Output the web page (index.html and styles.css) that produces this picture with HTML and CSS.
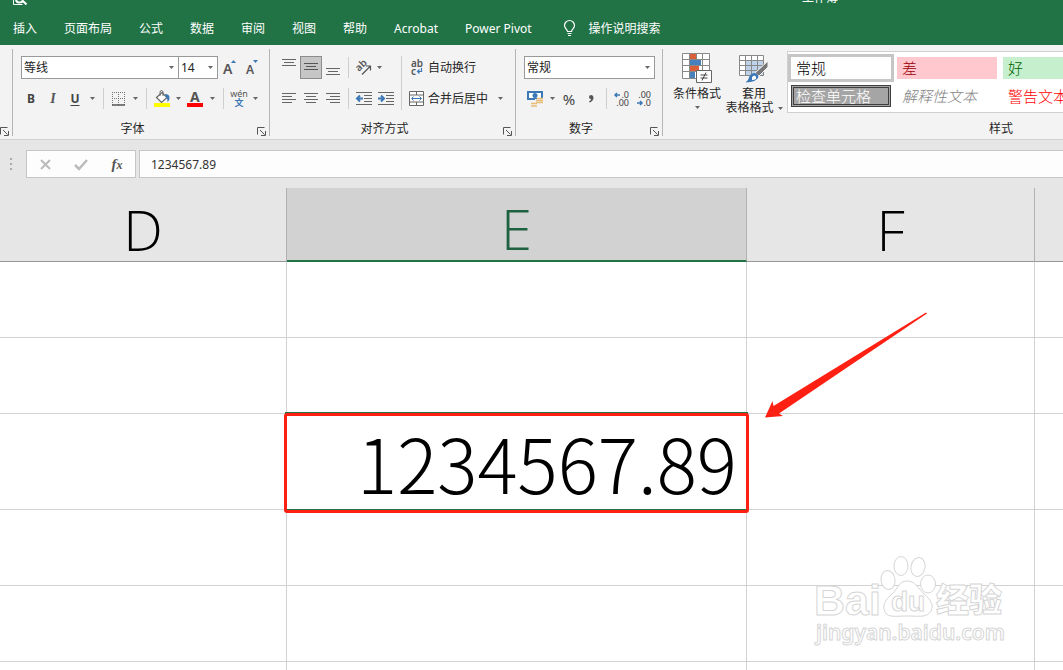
FILE: index.html
```html
<!DOCTYPE html>
<html lang="zh-CN">
<head>
<meta charset="utf-8">
<title>工作簿</title>
<link rel="stylesheet" href="styles.css">
</head>
<body>
<svg class="defs" width="0" height="0" aria-hidden="true">
  <symbol id="caret" viewBox="0 0 5 3"><path d="M0 0h5L2.500 3z" fill="#666"/></symbol>
  <symbol id="launch" viewBox="0 0 9 9"><path d="M.5 7.500v-7h7M3 3l4.500 4.500M8.500 4v4.500H4" fill="none" stroke="#555"/></symbol>
</svg>
<div class="app">
  <header class="top">
    <div class="titlebar">
      <svg class="preview" width="15" height="7" viewBox="0 0 15 7"><path d="M.5 0v5.500h9" fill="none" stroke="#fff"/><path d="M3 0q0 3.500 3.500 3.500T10 0M9.500 1.500l4 4" fill="none" stroke="#fff" stroke-width="2"/></svg>
      <span class="title">工作簿</span>
    </div>
    <nav class="tabs">
      <button>插入</button><button>页面布局</button><button>公式</button><button>数据</button><button>审阅</button><button>视图</button><button>帮助</button><button>Acrobat</button><button>Power Pivot</button>
      <button class="tell"><svg width="13" height="17" viewBox="0 0 13 17"><path d="M4.500 11.500C4.500 9.500 1.500 8.500 1.500 5.500a5 5 0 0 1 10 0c0 3-3 4-3 6zM4.500 13.500h4M5 15.500h3" fill="none" stroke="#fff" stroke-width="1.200"/></svg>操作说明搜索</button>
    </nav>
  </header>

  <div class="ribbon">
    <section class="group clip">
      <div class="foot"><button class="launch" aria-label="剪贴板设置"><svg width="9" height="9"><use href="#launch"/></svg></button></div>
    </section>

    <section class="group font">
      <div class="row fields">
        <label class="combo name"><select aria-label="字体"><option>等线</option></select><svg width="5" height="3"><use href="#caret"/></svg></label>
        <label class="combo size"><select aria-label="字号"><option>14</option></select><svg width="5" height="3"><use href="#caret"/></svg></label>
        <button class="tool w24" aria-label="增大字号"><svg width="14" height="16" viewBox="0 0 14 16"><text x="0" y="14" class="big-a">A</text><path d="M8 3h5L10.500 0z" fill="#3b78b5"/></svg></button>
        <button class="tool w20" aria-label="减小字号"><svg width="14" height="16" viewBox="0 0 14 16"><text x="1" y="14" class="small-a">A</text><path d="M8 0h5L10.500 3z" fill="#3b78b5"/></svg></button>
      </div>
      <div class="row">
        <button class="tool w22 bold">B</button><button class="tool w22 italic">I</button><button class="tool w22 under">U</button><button class="drop" aria-label="下划线选项"><svg width="5" height="3"><use href="#caret"/></svg></button>
        <i class="sep"></i>
        <button class="tool w20" aria-label="边框"><svg width="14" height="14" viewBox="0 0 14 14"><path d="M0 .5h13M0 6.500h13M.5 0v13M6.500 0v13M12.500 0v13" fill="none" stroke="#777" stroke-dasharray="1 1"/><path d="M0 13h13" stroke="#555" stroke-width="1.500"/></svg></button><button class="drop" aria-label="边框选项"><svg width="5" height="3"><use href="#caret"/></svg></button>
        <i class="sep"></i>
        <button class="tool w20" aria-label="填充颜色"><svg width="17" height="17" viewBox="0 0 17 17"><path d="M2.500 7.500L8 2.500l5 5-5.500 5z" fill="#fff" stroke="#666" stroke-width="1.200"/><path d="M6 6V2.500q0-2 1.500-2t1.500 2V6" fill="none" stroke="#666"/><path d="M11 4q4 0 4.500 3t-2 5q.5-3-2-6z" fill="#3b78b5"/><path d="M0 13h16v4H0z" fill="#ff0"/></svg></button><button class="drop" aria-label="填充选项"><svg width="5" height="3"><use href="#caret"/></svg></button>
        <button class="tool w22" aria-label="字体颜色"><svg width="16" height="17" viewBox="0 0 16 17"><text x="3" y="12" class="color-a">A</text><path d="M0 13h16v4H0z" fill="#f00"/></svg></button><button class="drop" aria-label="颜色选项"><svg width="5" height="3"><use href="#caret"/></svg></button>
        <i class="sep"></i>
        <button class="tool w20 phon"><span>wén</span><b>文</b></button><button class="drop" aria-label="拼音选项"><svg width="5" height="3"><use href="#caret"/></svg></button>
      </div>
      <div class="foot"><span>字体</span><button class="launch" aria-label="字体设置"><svg width="9" height="9"><use href="#launch"/></svg></button></div>
    </section>

    <section class="group align">
      <div class="halves">
        <div class="stack">
          <div class="row">
            <button class="tool w22" aria-label="顶端对齐"><svg width="14" height="17" viewBox="0 0 14 17"><path d="M0 .5h14M2 3.500h10M0 6.500h14" stroke="#666"/></svg></button><button class="tool w22 on" aria-label="垂直居中"><svg width="14" height="15" viewBox="0 0 14 15"><path d="M0 3.500h14M2 6.500h10M0 9.500h14" stroke="#555"/></svg></button><button class="tool w22" aria-label="底端对齐"><svg width="14" height="15" viewBox="0 0 14 15"><path d="M0 8.500h14M2 11.500h10M0 14.500h14" stroke="#666"/></svg></button>
            <i class="sep near"></i>
            <button class="tool w20" aria-label="方向"><svg width="17" height="17" viewBox="0 0 17 17"><text x="4" y="13" class="tilt" transform="rotate(-45 4 13)">ab</text><path d="M7 15.500l8-8M11 7h4.500v4.500" fill="none" stroke="#555" stroke-width="1.200"/></svg></button><button class="drop" aria-label="方向选项"><svg width="5" height="3"><use href="#caret"/></svg></button>
          </div>
          <div class="row">
            <button class="tool w22" aria-label="左对齐"><svg width="14" height="11" viewBox="0 0 14 11"><path d="M0 .5h14M0 3.500h10M0 6.500h14M0 9.500h10" stroke="#666"/></svg></button><button class="tool w22" aria-label="居中"><svg width="14" height="11" viewBox="0 0 14 11"><path d="M0 .5h14M2 3.500h10M0 6.500h14M2 9.500h10" stroke="#666"/></svg></button><button class="tool w22" aria-label="右对齐"><svg width="14" height="11" viewBox="0 0 14 11"><path d="M0 .5h14M4 3.500h10M0 6.500h14M4 9.500h10" stroke="#666"/></svg></button>
            <i class="sep near"></i>
            <button class="tool w22" aria-label="减少缩进"><svg width="16" height="13" viewBox="0 0 16 13"><path d="M0 .5h16M8 3.500h8M8 6.500h8M8 9.500h8M0 12.500h16" stroke="#666"/><path d="M7 6.500H2M4 3.500l-3 3 3 3" fill="none" stroke="#3b78b5" stroke-width="2"/></svg></button><button class="tool w22" aria-label="增加缩进"><svg width="16" height="13" viewBox="0 0 16 13"><path d="M0 .5h16M8 3.500h8M8 6.500h8M8 9.500h8M0 12.500h16" stroke="#666"/><path d="M0 6.500h5M3 3.500l3 3-3 3" fill="none" stroke="#3b78b5" stroke-width="2"/></svg></button>
          </div>
        </div>
        <i class="sep tall"></i>
        <div class="stack">
          <div class="row"><button class="wide"><svg width="17" height="17" viewBox="0 0 17 17"><text x="3" y="8" class="wrap-t">ab</text><text x="3" y="16" class="wrap-t">c</text><path d="M13.500 9v3.500H10M11.500 10.500l-2 2 2 2" fill="none" stroke="#3b78b5" stroke-width="1.200"/></svg>自动换行</button></div>
          <div class="row"><button class="wide"><svg width="17" height="16" viewBox="0 0 17 16"><path d="M1.500.5h14v14h-14zM1.500 4h14M1.500 11h14M8.500 0v4M8.500 11v4" fill="#fff" stroke="#666"/><path d="M4 7.500h9M5.500 5.500l-2 2 2 2M11.500 5.500l2 2-2 2" fill="none" stroke="#3b78b5"/></svg>合并后居中</button><button class="drop merge" aria-label="合并选项"><svg width="5" height="3"><use href="#caret"/></svg></button></div>
        </div>
      </div>
      <div class="foot"><span>对齐方式</span><button class="launch" aria-label="对齐设置"><svg width="9" height="9"><use href="#launch"/></svg></button></div>
    </section>

    <section class="group number">
      <div class="row"><label class="combo format"><select aria-label="数字格式"><option>常规</option></select><svg width="5" height="3"><use href="#caret"/></svg></label></div>
      <div class="row">
        <button class="tool w22" aria-label="会计数字格式"><svg width="17" height="16" viewBox="0 0 17 16"><path d="M1 1h14v7H1z" fill="#fff" stroke="#3b78b5" stroke-width="2"/><circle cx="8" cy="4.500" r="2.500" fill="#3b78b5"/><path d="M8 8h9v7H4v-4h4z" fill="#f3f3f3"/><path d="M10 7.500h6M9 9.500h7M9 11.500h7M4 12.500h6M4 15h6" stroke="#e8bd78" stroke-width="1.500"/></svg></button><button class="drop" aria-label="货币选项"><svg width="5" height="3"><use href="#caret"/></svg></button><button class="tool w22 pct">%</button><button class="tool w22" aria-label="千位分隔"><svg width="6" height="8" viewBox="0 0 6 8"><path d="M1 2q0-2 2.200-2T5.500 2.500Q5.500 6 1.500 7.500L1 6.500Q3 5.500 3 4 1 4 1 2z" fill="#555"/></svg></button>
        <i class="sep near"></i>
        <button class="tool w22" aria-label="增加小数位数"><svg width="16" height="16" viewBox="0 0 16 16"><text x="15" y="7" class="dec">.0</text><text x="15" y="15" class="dec">.00</text><path d="M1 4h5M3 2L1 4l2 2" fill="none" stroke="#3b78b5" stroke-width="1.500"/></svg></button><button class="tool w22" aria-label="减少小数位数"><svg width="16" height="16" viewBox="0 0 16 16"><text x="15" y="7" class="dec">.00</text><text x="15" y="15" class="dec">.0</text><path d="M1 12h5M4 10l2 2-2 2" fill="none" stroke="#3b78b5" stroke-width="1.500"/></svg></button>
      </div>
      <div class="foot"><span>数字</span><button class="launch" aria-label="数字设置"><svg width="9" height="9"><use href="#launch"/></svg></button></div>
    </section>

    <section class="group styles">
      <div class="style-row">
        <button class="large">
          <svg width="30" height="31" viewBox="0 0 30 31"><path d="M.5.500h27v25H.5z" fill="#fff"/><path d="M8 1h6v5H8zM8 13h9v5H8z" fill="#d9603b"/><path d="M8 7h11v5H8zM8 19h5v6H8z" fill="#4680bd"/><path d="M.5.500h27v25H.5zM0 6.500h27M0 12.500h27M0 18.500h27M7.500 0v25M14.500 0v6M20.500 0v25" fill="none" stroke="#888"/><path d="M14.500 17.500h15v12h-15z" fill="#fff" stroke="#666"/><path d="M18.500 22h7M18.500 25h7M24 19.500l-4 8" stroke="#444"/></svg>
          <span>条件格式</span><svg class="below" width="5" height="3"><use href="#caret"/></svg>
        </button>
        <button class="large table-style">
          <svg width="30" height="31" viewBox="0 0 30 31"><path d="M.5 2.500h24v20H.5z" fill="#fff"/><path d="M7 8h18v15H7z" fill="#bdd1e8"/><path d="M.5 2.500h24v20H.5zM0 7.500h24M0 12.500h24M0 17.500h24M6.500 2v20M12.500 2v20M18.500 2v20" fill="none" stroke="#888"/><path d="M29 8v6l-9 9-4-3z" fill="#777" stroke="#f3f3f3"/><path d="M15 20q4 0 4.500 4-2 5-13 5.500 3-2 3.500-5t5-4.500z" fill="#3b78b5"/><path d="M13 24q3-3 4 0t-4 3z" fill="#fff"/></svg>
          <span>套用</span><span class="with-caret">表格格式<svg width="5" height="3"><use href="#caret"/></svg></span>
        </button>
        <div class="gallery">
          <button class="cell normal">常规</button><button class="cell bad">差</button><button class="cell good">好</button>
          <button class="cell check">检查单元格</button><button class="cell note">解释性文本</button><button class="cell warn">警告文本</button>
        </div>
      </div>
      <div class="foot"><span>样式</span></div>
    </section>
  </div>

  <div class="formula">
    <svg class="grip" width="3" height="12" viewBox="0 0 3 12"><path d="M0 0h2v2H0zM0 5h2v2H0zM0 10h2v2H0z" fill="#aaa"/></svg>
    <div class="actions">
      <button aria-label="取消"><svg width="11" height="11" viewBox="0 0 11 11"><path d="M1 1l9 9M10 1l-9 9" stroke="#bbb" stroke-width="2"/></svg></button>
      <button aria-label="输入"><svg width="14" height="11" viewBox="0 0 14 11"><path d="M1 6l4 4 8-9" fill="none" stroke="#bbb" stroke-width="2.500"/></svg></button>
      <button class="fx"><i>f</i><small>x</small></button>
    </div>
    <input class="entry" aria-label="编辑栏" value="1234567.89">
  </div>

  <main class="sheet">
    <table class="grid">
      <colgroup><col class="col-d"><col class="col-e"><col class="col-f"><col></colgroup>
      <thead><tr><th scope="col">D</th><th scope="col" class="active">E</th><th scope="col">F</th><th></th></tr></thead>
      <tbody>
        <tr><td></td><td></td><td></td><td></td></tr>
        <tr><td></td><td></td><td></td><td></td></tr>
        <tr class="big"><td></td><td class="value">1234567.89<span class="select-box"></span><span class="red-box"></span></td><td></td><td></td></tr>
        <tr><td></td><td></td><td></td><td></td></tr>
        <tr><td></td><td></td><td></td><td></td></tr>
        <tr><td></td><td></td><td></td><td></td></tr>
      </tbody>
    </table>
    <svg class="arrow" width="164" height="108" viewBox="0 0 164 108"><path d="M0 105.500L7.500 89l1 5L161 .5l1 1L14 101.500l4 2.500z" fill="#ff2014"/></svg>
    <svg class="mark" width="200" height="100" viewBox="0 0 200 100">
      <g class="mark-shape">
        <text x="4" y="63" class="mark-bai">Bai</text>
        <ellipse cx="78" cy="28" rx="7" ry="9.500" transform="rotate(-8 78 28)"/><ellipse cx="91" cy="14" rx="7" ry="9.500"/><ellipse cx="108" cy="15" rx="7" ry="9.500" transform="rotate(12 108 15)"/><ellipse cx="118" cy="32" rx="7.500" ry="9"/>
        <path d="M97 29c8 0 11 7 16 12s12 10 8 18c-4 7-12 5-24 5s-18 2-22-4c-4-9 3-14 8-19s6-12 14-12z"/>
        <text x="81" y="59" class="mark-du">du</text>
        <text x="126" y="60" class="mark-cn">经验</text>
        <text x="6" y="88" class="mark-url">jingyan.baidu.com</text>
      </g>
    </svg>
  </main>
</div>
</body>
</html>
```

FILE: styles.css
```css
* { box-sizing: border-box; }

body {
  margin: 0;
  font-family: "Noto Sans", "Noto Sans CJK SC", sans-serif;
  font-size: 12px;
  line-height: 16px;
  color: #262626;
}

button, input, select {
  margin: 0;
  padding: 0;
  border: 0;
  border-radius: 0;
  background: none;
  font: inherit;
  color: inherit;
}

button svg { flex: none; overflow: visible; }

.defs { position: absolute; }

.app {
  display: flex;
  flex-direction: column;
  height: 100vh;
  overflow: hidden;
  background: #e6e6e6;
}

/* Title strip and tabs */
.top { flex: none; background: #217346; color: #fff; }

.titlebar {
  display: flex;
  align-items: flex-end;
  height: 12px;
  padding: 0 0 6px 13px;
  overflow: hidden;
}

.preview { flex: none; }
.title { margin: 0 225px 0 auto; }

.tabs {
  display: flex;
  align-items: center;
  gap: 27px;
  height: 33px;
  padding-left: 13px;
  white-space: nowrap;
}

.tell { display: flex; align-items: center; gap: 13px; padding-left: 4px; }

/* Ribbon */
.ribbon {
  display: flex;
  flex: none;
  padding: 4px 0 3px;
  background: #f3f3f3;
  border-bottom: 1px solid #d2d2d2;
  overflow: hidden;
  white-space: nowrap;
}

.group {
  display: flex;
  flex: none;
  flex-direction: column;
  gap: 8px;
  min-height: 87px;
  padding: 7px 0 0 7px;
  border-right: 1px solid #b5b5b5;
}

.clip { width: 13px; padding-left: 0; }
.font { width: 257px; }
.align { width: 246px; padding-left: 8px; }
.number { width: 147px; padding-left: 8px; }
.styles { flex: 1 0 680px; padding: 2px 0 0 6px; gap: 0; border: 0; }

.row { display: flex; align-items: center; height: 23px; }
.fields { padding-left: 1px; }
.halves { display: flex; }
.stack { display: flex; flex-direction: column; gap: 8px; }

.foot {
  display: flex;
  align-items: flex-end;
  height: 16px;
  margin: auto 3px 0 -8px;
}

.foot span { flex: 1; padding-right: 4px; line-height: 14px; text-align: center; }
.foot .launch { display: flex; width: 9px; height: 9px; }
.clip .foot { margin: auto 2px 0 0; }
.styles .foot { margin: auto 0 0 -6px; }

.combo { display: grid; align-items: center; }
.combo select,
.combo svg { grid-area: 1 / 1; }
.combo svg { justify-self: end; margin-right: 5px; pointer-events: none; }
.combo select {
  width: 100%;
  height: 23px;
  padding-left: 2px;
  border: 1px solid #999;
  background: #fff;
  color: #222;
  appearance: none;
}
.name { width: 158px; }
.size { width: 40px; margin-left: -1px; }
.format { width: 131px; }

.tool, .drop {
  display: flex;
  flex: none;
  align-items: center;
  justify-content: center;
  height: 23px;
}

.w20 { width: 20px; }
.w22 { width: 22px; }
.w24 { width: 24px; }
.drop { width: 12px; }
.merge { margin-left: 6px; }
.on { background: #c6c6c6; border: 1px solid #8c8c8c; }
.bold { font-weight: 700; color: #444; }
.italic { font-family: "Liberation Serif", serif; font-size: 14px; font-weight: 700; font-style: italic; color: #555; }
.under { font-weight: 700; text-decoration: underline; text-underline-offset: 2px; color: #444; }
.pct { font-size: 15px; color: #444; }

.sep { flex: none; width: 1px; height: 21px; margin: 0 5px; background: #cfcfcf; }
.near { margin: 0 4px; }
.tall { height: 54px; margin: 0 6px 0 4px; }

.phon { flex-direction: column; color: #555; }
.phon span { font-size: 9px; line-height: 8px; }
.phon b { font-size: 9px; line-height: 9px; color: #3b78b5; }

.big-a, .small-a, .color-a, .tilt, .wrap-t { fill: #555; font-weight: 600; }
.big-a { font-size: 14px; }
.small-a { font-size: 12px; }
.color-a { font-size: 14px; font-weight: 700; }
.tilt, .wrap-t { font-size: 10px; }
.dec { font-size: 9px; fill: #444; text-anchor: end; }

.wide { display: flex; align-items: center; gap: 3px; }

.style-row { display: flex; height: 62px; }
.large {
  display: flex;
  flex-direction: column;
  align-items: center;
  width: 56px;
  padding-top: 2px;
  line-height: 14px;
}
.large > svg:first-child { margin-bottom: 3px; }
.large .below { margin-top: 5px; }
.with-caret { display: flex; align-items: center; gap: 4px; }
.table-style { width: 62px; padding-right: 4px; }

.gallery {
  display: grid;
  flex: 1;
  grid-template-columns: repeat(3, 100px);
  grid-auto-rows: 22px;
  gap: 6px;
  padding: 5px 3px;
  border: 1px solid #d0d0d0;
  background: #fff;
}
.cell {
  padding-left: 5px;
  font-family: "Noto Sans CJK SC Light", "Noto Sans CJK SC", sans-serif;
  font-size: 15px;
  font-weight: 300;
  line-height: 20px;
  text-align: left;
}
.normal { outline: 3px solid #c6c6c6; color: #000; }
.bad { background: #ffc7ce; color: #9c0006; }
.good { background: #c6efce; color: #006100; }
.check { padding-left: 2px; border: 3px double #3f3f3f; background: #a5a5a5; color: #fff; font-weight: 500; line-height: 14px; }
.note { color: #7f7f7f; font-style: italic; }
.warn { color: #f00; }

/* Formula bar */
.formula { display: flex; flex: none; align-items: center; padding: 10px 0 10px 10px; }
.grip { margin-right: 13px; }
.actions {
  display: flex;
  align-items: center;
  width: 110px;
  height: 28px;
  margin-right: 3px;
  border: 1px solid #c6c6c6;
  background: #fdfdfd;
}
.actions button { display: flex; flex: 1; justify-content: center; align-items: baseline; }
.fx { font-family: "Liberation Serif", serif; font-size: 15px; font-weight: 700; font-style: italic; color: #555; }
.fx small { font-size: 12px; }
.entry {
  flex: 1;
  height: 28px;
  padding-left: 11px;
  border: 1px solid #c6c6c6;
  border-right: 0;
  background: #fdfdfd;
  color: #333;
}

/* Worksheet */
.sheet { position: relative; flex: 1; overflow: hidden; background: #fff; }
.grid {
  width: 100%;
  border-collapse: separate;
  border-spacing: 0;
  table-layout: fixed;
  color: #000;
}
.col-d { width: 287px; }
.col-e { width: 460px; }
.col-f { width: 288px; }

.grid th {
  height: 74px;
  padding: 8px 0 0;
  border-right: 1px solid #b1b1b1;
  border-bottom: 1px solid #999;
  background: #e6e6e6;
  font-family: "Open Sans Light", "Open Sans", sans-serif;
  font-size: 56px;
  font-weight: 300;
  line-height: 64px;
}
.grid th.active { border-bottom: 2px solid #217346; background: #d2d2d2; color: #1e6241; }
.grid td {
  height: 76px;
  padding: 0;
  border-right: 1px solid #d2d2d2;
  border-bottom: 1px solid #d2d2d2;
}
.grid th:last-child,
.grid td:last-child { border-right: 0; }
.grid .big td { height: 96px; }
.grid .value {
  position: relative;
  padding: 0 9px 0 0;
  font-family: "Noto Sans CJK SC Light", "Noto Sans CJK SC", sans-serif;
  font-size: 75px;
  font-weight: 300;
  line-height: 84px;
  text-align: right;
}

.select-box { position: absolute; inset: -2px; border: 2px solid #217346; }
.red-box { position: absolute; inset: -1px -3px -4px; border: 3px solid #ff2014; border-radius: 3px; }

.arrow { position: absolute; left: 765px; top: 124px; }

.mark { position: absolute; left: 810px; top: 364px; }
.mark-shape { fill: #fff; stroke: #d6d6d6; stroke-width: 1; }
.mark-bai { font: 700 43px "Liberation Sans", sans-serif; }
.mark-du { font: 700 28px "Liberation Sans", sans-serif; }
.mark-cn { font: 900 33px "Noto Sans CJK SC", sans-serif; }
.mark-url { font: 600 21px "Noto Sans", sans-serif; }
```
